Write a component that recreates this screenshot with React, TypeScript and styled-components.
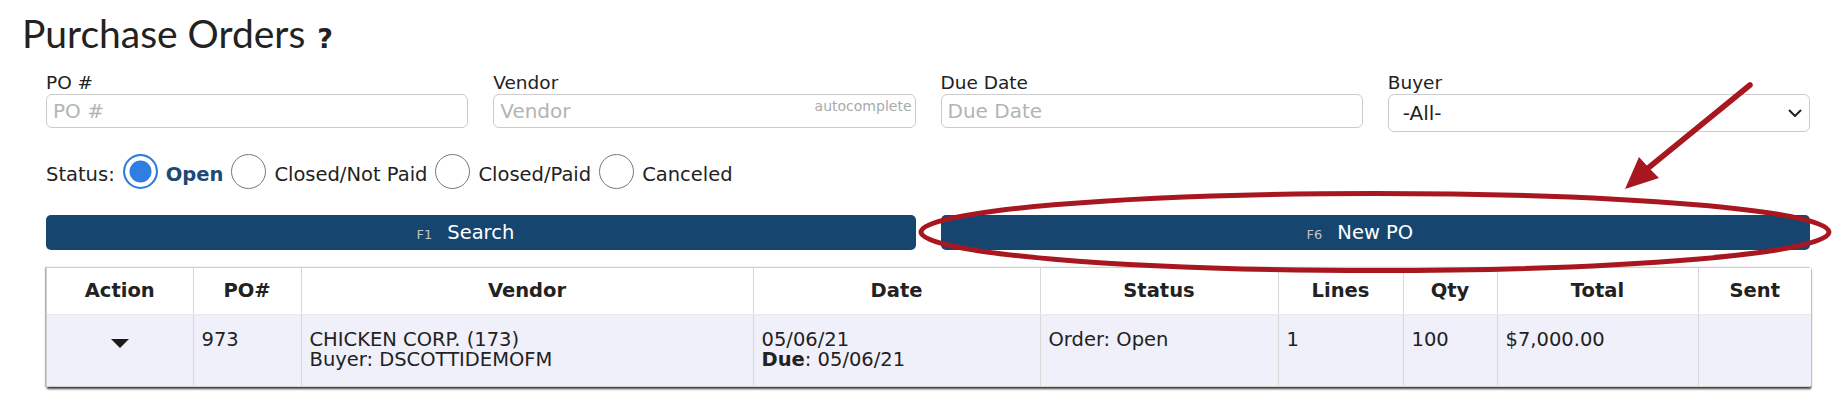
import React from "react";
import styled, { createGlobalStyle } from "styled-components";

const GlobalStyle = createGlobalStyle`
  html, body { margin: 0; padding: 0; background: #fff; }
  body { font-family: "DejaVu Sans", Verdana, sans-serif; color: #222; }
  *, *::before, *::after { box-sizing: border-box; }
`;

const Page = styled.div`
  position: relative;
  width: 1844px;
  height: 409px;
  overflow: hidden;
  padding: 10px 0 0 22px;
`;

const TitleRow = styled.h1`
  margin: 0;
  display: flex;
  align-items: baseline;
  font-family: Lato, "Open Sans", sans-serif;
  font-weight: 400;
  font-size: 39px;
  line-height: 47px;
  color: #222;
`;

const Help = styled.span`
  margin-left: 12px;
  font-family: "DejaVu Sans", sans-serif;
  font-weight: 700;
  font-size: 27px;
  color: #222;
`;

const Main = styled.div`
  width: 1764px;
  margin: 10px 0 0 24px;
`;

const Fields = styled.div`
  display: grid;
  grid-template-columns: repeat(4, 1fr);
  column-gap: 25px;
  align-items: start;
`;

const Field = styled.label`
  display: flex;
  flex-direction: column;
`;

const FieldLabel = styled.span`
  font-size: 18.5px;
  line-height: 22px;
  color: #222;
`;

const InputWrap = styled.div`
  position: relative;
`;

const TextInput = styled.input`
  width: 100%;
  height: 34px;
  border: 1px solid #cccccc;
  border-radius: 6px;
  padding: 0 6px;
  font-family: "DejaVu Sans", sans-serif;
  font-size: 20px;
  color: #222;
  background: #fff;
  outline: none;
  &::placeholder {
    color: #b4b4b4;
  }
`;

const Hint = styled.span`
  position: absolute;
  top: 4px;
  right: 4px;
  font-size: 14px;
  color: #aaaaaa;
  pointer-events: none;
`;

const Select = styled.select`
  appearance: none;
  width: 100%;
  height: 38px;
  border: 1px solid #cccccc;
  border-radius: 6px;
  padding: 0 30px 0 14px;
  font-family: "DejaVu Sans", sans-serif;
  font-size: 20px;
  color: #222;
  background: #fff;
  outline: none;
`;

const Chevron = styled.svg`
  position: absolute;
  top: 15px;
  right: 8px;
  pointer-events: none;
`;

const StatusRow = styled.div`
  display: flex;
  align-items: flex-start;
  gap: 8px;
  margin-top: 22px;
  height: 35px;
  font-size: 19.5px;
`;

const StatusText = styled.span<{ $active?: boolean }>`
  padding-top: 9px;
  line-height: 24px;
  font-weight: ${(p) => (p.$active ? 700 : 400)};
  color: ${(p) => (p.$active ? "#1d4a75" : "#222")};
`;

const Option = styled.label`
  display: flex;
  align-items: flex-start;
  gap: 8px;
`;

const Radio = styled.input.attrs({ type: "radio" })`
  appearance: none;
  margin: 0;
  width: 35px;
  height: 35px;
  border-radius: 50%;
  border: 1.5px solid #777;
  background: #fff;
  &:checked {
    border: 2px solid #2f7fe3;
    background: #2f7fe3;
    box-shadow: inset 0 0 0 4.5px #fff;
  }
`;

const Actions = styled.div`
  display: grid;
  grid-template-columns: 1fr 1fr;
  column-gap: 25px;
  margin-top: 26px;
`;

const ActionButton = styled.button`
  height: 35px;
  border: 0;
  border-radius: 5px;
  background: #164670;
  color: #fff;
  display: grid;
  grid-template-columns: 1fr auto 1fr;
  align-items: baseline;
  align-content: center;
  column-gap: 15px;
  padding: 0;
  font-family: "DejaVu Sans", sans-serif;
  font-size: 19.5px;
  cursor: pointer;
`;

const Key = styled.span`
  justify-self: end;
  font-size: 13px;
  color: #c4c4c4;
`;

const TableWrap = styled.div`
  margin-top: 17px;
  border: 1px solid #cfcfcf;
  box-shadow: 1px 2px 2px rgba(0, 0, 0, 0.75), -1px 0 1px rgba(0, 0, 0, 0.25);
`;

const Table = styled.table`
  width: 100%;
  border-collapse: collapse;
  table-layout: fixed;
  font-size: 19.5px;
  color: #222;
`;

const Th = styled.th`
  height: 46px;
  padding: 0 8px;
  font-weight: 700;
  text-align: center;
  background: #fff;
  border-left: 1px solid #d8d8d8;
  border-bottom: 1px solid #e8e8ee;
  &:first-child {
    border-left: 0;
  }
`;

const Td = styled.td<{ $center?: boolean }>`
  vertical-align: top;
  padding: 15px 8px 16px;
  line-height: 20px;
  background: #f0f0fa;
  text-align: ${(p) => (p.$center ? "center" : "left")};
  border-left: 1px solid #d8d8d8;
  &:first-child {
    border-left: 0;
  }
`;

const Caret = styled.svg`
  display: block;
  margin: 9px auto 0;
`;

const Overlay = styled.svg`
  position: absolute;
  top: 0;
  left: 0;
  pointer-events: none;
`;

const columns: { label: string; width: number }[] = [
  { label: "Action", width: 146 },
  { label: "PO#", width: 108 },
  { label: "Vendor", width: 452 },
  { label: "Date", width: 287 },
  { label: "Status", width: 238 },
  { label: "Lines", width: 125 },
  { label: "Qty", width: 94 },
  { label: "Total", width: 201 },
  { label: "Sent", width: 113 },
];

const statuses = ["Open", "Closed/Not Paid", "Closed/Paid", "Canceled"];

export default function App() {
  return (
    <>
      <GlobalStyle />
      <Page>
        <TitleRow>
          Purchase Orders<Help>?</Help>
        </TitleRow>
        <Main>
          <Fields>
            <Field>
              <FieldLabel>PO #</FieldLabel>
              <TextInput placeholder="PO #" />
            </Field>
            <Field>
              <FieldLabel>Vendor</FieldLabel>
              <InputWrap>
                <TextInput placeholder="Vendor" />
                <Hint>autocomplete</Hint>
              </InputWrap>
            </Field>
            <Field>
              <FieldLabel>Due Date</FieldLabel>
              <TextInput placeholder="Due Date" />
            </Field>
            <Field>
              <FieldLabel>Buyer</FieldLabel>
              <InputWrap>
                <Select defaultValue="all">
                  <option value="all">-All-</option>
                </Select>
                <Chevron width="14" height="8" viewBox="0 0 14 8">
                  <path d="M1 1 L7 7 L13 1" fill="none" stroke="#222" strokeWidth="2" />
                </Chevron>
              </InputWrap>
            </Field>
          </Fields>

          <StatusRow>
            <StatusText>Status:</StatusText>
            {statuses.map((s, i) => (
              <Option key={s}>
                <Radio name="status" defaultChecked={i === 0} />
                <StatusText $active={i === 0}>{s}</StatusText>
              </Option>
            ))}
          </StatusRow>

          <Actions>
            <ActionButton>
              <Key>F1</Key>
              <span>Search</span>
            </ActionButton>
            <ActionButton>
              <Key>F6</Key>
              <span>New PO</span>
            </ActionButton>
          </Actions>

          <TableWrap>
            <Table>
              <colgroup>
                {columns.map((c) => (
                  <col key={c.label} style={{ width: c.width }} />
                ))}
              </colgroup>
              <thead>
                <tr>
                  {columns.map((c) => (
                    <Th key={c.label}>{c.label}</Th>
                  ))}
                </tr>
              </thead>
              <tbody>
                <tr>
                  <Td $center>
                    <Caret width="18" height="9" viewBox="0 0 18 9">
                      <path d="M0 0 H18 L9 9 Z" fill="#1a1a1a" />
                    </Caret>
                  </Td>
                  <Td>973</Td>
                  <Td>
                    CHICKEN CORP. (173)
                    <br />
                    Buyer: DSCOTTIDEMOFM
                  </Td>
                  <Td>
                    05/06/21
                    <br />
                    <b>Due</b>: 05/06/21
                  </Td>
                  <Td>Order: Open</Td>
                  <Td>1</Td>
                  <Td>100</Td>
                  <Td>$7,000.00</Td>
                  <Td></Td>
                </tr>
              </tbody>
            </Table>
          </TableWrap>
        </Main>

        <Overlay width="1844" height="409" viewBox="0 0 1844 409">
          <ellipse cx="1375" cy="232" rx="454" ry="38.5" fill="none" stroke="#a8171f" strokeWidth="5" />
          <line x1="1750" y1="85" x2="1647" y2="169" stroke="#a8171f" strokeWidth="5.5" strokeLinecap="round" />
          <polygon points="1625,189 1639,157 1649,168 1659,178" fill="#a8171f" />
        </Overlay>
      </Page>
    </>
  );
}
